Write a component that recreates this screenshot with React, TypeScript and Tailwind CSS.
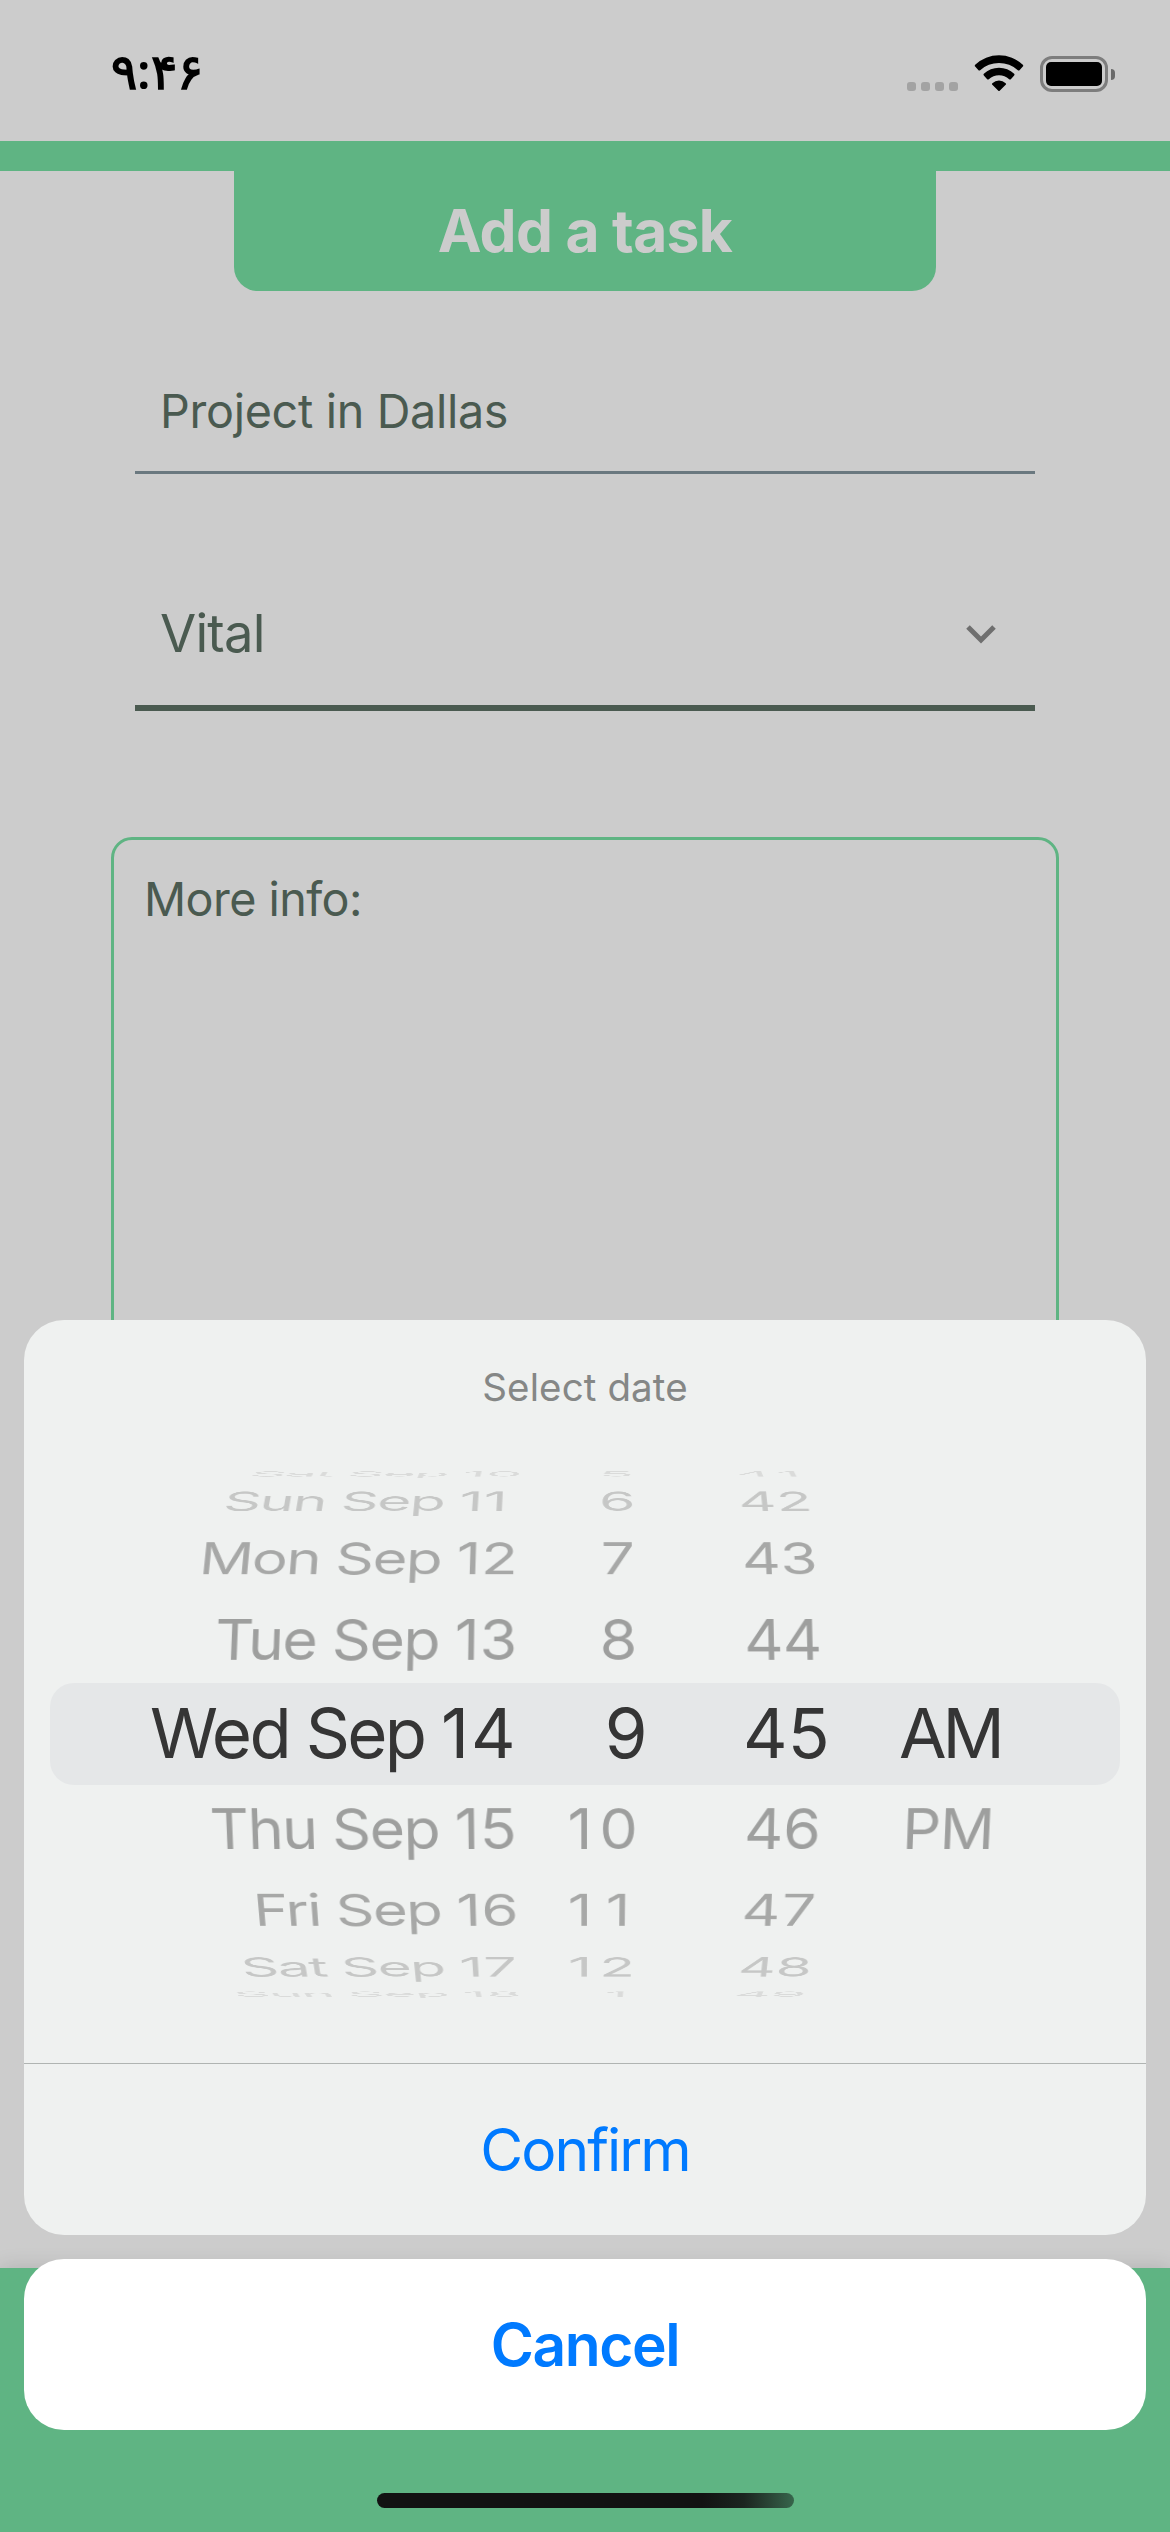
import React from 'react';

type WheelRow = {
  step: number;
  weekday: string;
  day: string;
  hour: string;
  minute: string;
  period: string;
  color: string;
};

const rows: WheelRow[] = [
  { step: -4, weekday: 'Sat', day: '10', hour: '5', minute: '41', period: '', color: 'text-[#dadbda]' },
  { step: -3, weekday: 'Sun', day: '11', hour: '6', minute: '42', period: '', color: 'text-[#c6c7c6]' },
  { step: -2, weekday: 'Mon', day: '12', hour: '7', minute: '43', period: '', color: 'text-[#a7a8a7]' },
  { step: -1, weekday: 'Tue', day: '13', hour: '8', minute: '44', period: '', color: 'text-[#9e9f9e]' },
  { step: 1, weekday: 'Thu', day: '15', hour: '10', minute: '46', period: 'PM', color: 'text-[#9e9f9e]' },
  { step: 2, weekday: 'Fri', day: '16', hour: '11', minute: '47', period: '', color: 'text-[#a7a8a7]' },
  { step: 3, weekday: 'Sat', day: '17', hour: '12', minute: '48', period: '', color: 'text-[#c6c7c6]' },
  { step: 4, weekday: 'Sun', day: '18', hour: '1', minute: '49', period: '', color: 'text-[#dadbda]' },
];

// The wheel is a cylinder: each row sits on its surface, one step apart.
const RADIUS = 285;
const STEP_DEGREES = 19.5;
const PERSPECTIVE = 3146;

function wheelTransform(step: number) {
  return `perspective(${PERSPECTIVE}px) translateZ(${-RADIUS}px) rotateX(${-step * STEP_DEGREES}deg) translateZ(${RADIUS}px)`;
}

// Equal-width figures, each centred in its own cell.
function Figures({ value }: { value: string }) {
  return (
    <>
      {value.split('').map((digit, i) => (
        <span key={i} className="inline-block w-[0.635em] text-center">
          {digit}
        </span>
      ))}
    </>
  );
}

function WifiIcon() {
  return (
    <svg className="mx-4 mb-px h-9 w-[50px]" viewBox="252 45 150 108" fill="black">
      <path d="M255.500 74.500A104 104 0 0 1 398.500 74.500Q401 77 398.500 79.500L388.500 90.500Q386 92.500 383.500 90.500A84 84 0 0 0 270.500 90.500Q268 92.500 265.500 90.500L255.500 79.500Q253 77 255.500 74.500Z" />
      <path d="M281.500 101.500A65 65 0 0 1 372.500 101.500Q375 104 372.500 106.500L362.500 117.500Q360 119.500 357.500 117.500A45 45 0 0 0 296.500 117.500Q294 119.500 291.500 117.500L281.500 106.500Q279 104 281.500 101.500Z" />
      <path d="M307 129.500A30 30 0 0 1 347 129.500Q349.500 132 347 134.500L329 152Q327 154 325 152L307 134.500Q304.500 132 307 129.500Z" />
    </svg>
  );
}

function StatusBar() {
  return (
    <div className="flex h-[141px] items-end justify-between pr-[55px] pb-[49px] pl-[111px]">
      <span dir="ltr" className="mb-[-8px] font-['Noto_Sans',sans-serif] text-[49px] leading-[60px] font-semibold tracking-[-2.2px] text-black">
        ۹:۴۶
      </span>
      <div className="flex items-end">
        <div className="mb-px flex gap-[5px]">
          {[0, 1, 2, 3].map((dot) => (
            <span key={dot} className="size-[9px] rounded-[3px] bg-[#a3a3a3]" />
          ))}
        </div>
        <WifiIcon />
        <div className="flex items-center gap-[3px]">
          <div className="h-9 w-[68px] rounded-[12px] border-3 border-[#7d7d7d] p-[3px]">
            <div className="h-full rounded-[5px] bg-black" />
          </div>
          <span className="h-[11px] w-1 rounded-r-full bg-[#6a6a6a]" />
        </div>
      </div>
    </div>
  );
}

function TaskForm() {
  return (
    <>
      <div className="h-[30px] bg-[#5fb483]" />
      <h1 className="mx-auto flex h-[120px] w-[702px] items-center justify-center rounded-b-[24px] bg-[#5fb483] text-[58.700px] font-bold tracking-[-0.67px] text-[#cccccc]">
        Add a task
      </h1>
      <div className="mx-[135px] mt-[57px] flex h-[126px] items-center border-b-3 border-[#6a787f] pt-[3px] pl-[25px] text-[46.700px] tracking-[-0.32px] text-[#4a5a50]">
        Project in Dallas
      </div>
      <div className="mx-[135px] mt-[90px] flex h-[147px] items-center justify-between border-b-6 border-[#4a5a50] pr-[39px] pl-[25px]">
        <span className="mt-[-3px] text-[52.500px] tracking-[-0.79px] text-[#4a5a50]">Vital</span>
        <svg className="h-[19px] w-[30px]" viewBox="0 0 30 19" fill="none" stroke="#6f6f6f" strokeWidth="5">
          <path d="M2 2L15 15L28 2" />
        </svg>
      </div>
      <div className="mx-[111px] mt-[126px] h-[640px] rounded-[21px] border-3 border-[#5fb483] pt-[29px] pl-[30px] text-[46.700px] leading-[60px] tracking-[-0.57px] text-[#4a5a50]">
        More info:
      </div>
    </>
  );
}

function DateWheel() {
  return (
    <div className="mb-[49px] grid h-[560px] items-center [&>*]:col-start-1 [&>*]:row-start-1">
      <div className="mx-[26px] h-[102px] rounded-[24px] bg-[#e5e7e8]" />
      {rows.map((row) => (
        <div
          key={row.step}
          className={`grid h-[96px] grid-cols-[494px_120px_266px_242px] items-center text-[61px] leading-none whitespace-nowrap ${row.color}`}
          style={{ transform: wheelTransform(row.step) }}
        >
          <span className="text-right tracking-[-1.5px]">
            {row.weekday} Sep <span className="inline-block w-[64px] text-left tracking-[0.5px]">{row.day}</span>
          </span>
          <span className="text-right">
            <Figures value={row.hour} />
          </span>
          <span className="pl-[107px]">
            <Figures value={row.minute} />
          </span>
          <span className="tracking-[-1.2px]">{row.period}</span>
        </div>
      ))}
      <div className="grid h-[102px] grid-cols-[490px_134px_251px_247px] items-center pb-px text-[69px] leading-none whitespace-nowrap text-[#353535]">
        <span className="text-right tracking-[-2.7px]">
          Wed Sep <span className="inline-block w-[73px] text-left tracking-[2px]">14</span>
        </span>
        <span className="text-right">
          <Figures value="9" />
        </span>
        <span className="pl-[95px]">
          <Figures value="45" />
        </span>
        <span className="tracking-[-4px]">AM</span>
      </div>
    </div>
  );
}

function DateSheet() {
  return (
    <div className="absolute inset-x-6 top-[1320px] flex flex-col gap-6">
      <div className="h-[915px] overflow-hidden rounded-[40px] bg-[#eff1f0]">
        <div className="flex h-[134px] items-center justify-center pt-[2px] text-[38.500px] tracking-[0.11px] text-[#858786]">
          Select date
        </div>
        <DateWheel />
        <button className="flex h-[172px] w-full items-center justify-center border-t border-[#b0b4b2] pt-[2px] text-[58.700px] tracking-[-1.93px] text-[#007aff]">
          Confirm
        </button>
      </div>
      <button className="flex h-[171px] items-center justify-center rounded-[40px] bg-white pt-[2px] text-[58.700px] font-semibold tracking-[-1.45px] text-[#007aff]">
        Cancel
      </button>
    </div>
  );
}

export default function App() {
  return (
    <div className="relative flex h-[2532px] w-[1170px] flex-col overflow-hidden bg-[#cccccc] font-['Inter',sans-serif]">
      <StatusBar />
      <TaskForm />
      <div className="mt-auto flex h-[264px] items-end justify-center bg-[#5fb483] pb-6 shadow-[0_0_20px_rgba(0,0,0,0.14)]">
        <div className="h-[15px] w-[417px] rounded-full bg-linear-to-r from-[#121212] from-78% via-[#1b2520] via-88% to-[#37664c]" />
      </div>
      <DateSheet />
    </div>
  );
}
